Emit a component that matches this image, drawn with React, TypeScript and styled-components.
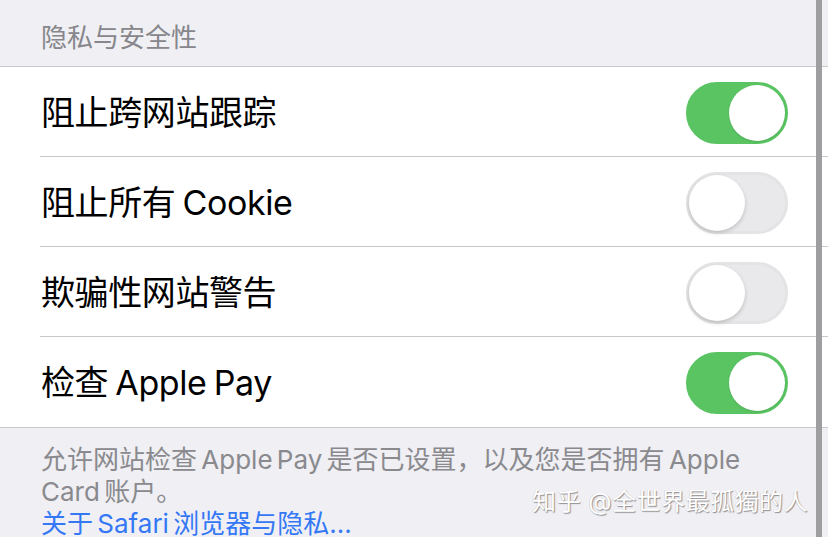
import React, { useState } from "react";
import styled, { createGlobalStyle } from "styled-components";

const GlobalStyle = createGlobalStyle`
  html, body {
    margin: 0;
    padding: 0;
    background: #efeff4;
    overflow: hidden;
  }
  body {
    font-family: Inter, "Noto Sans CJK SC", sans-serif;
    -webkit-font-smoothing: antialiased;
  }
`;

const Page = styled.div`
  position: relative;
  width: 828px;
  height: 537px;
  background: #efeff4;
  overflow: hidden;
`;

const SectionHeader = styled.div`
  height: 67px;
  padding: 23px 0 0 41px;
  box-sizing: border-box;
  font-size: 26px;
  line-height: 30px;
  color: #86868b;
  border-bottom: 1px solid #c8c7cc;
`;

const Group = styled.div`
  background: #ffffff;
  border-bottom: 1px solid #c8c7cc;
`;

const Row = styled.div<{ $last?: boolean }>`
  display: flex;
  align-items: center;
  justify-content: space-between;
  height: 90px;
  margin-left: 40px;
  padding: 2px 40px 0 0;
  box-sizing: border-box;
  border-bottom: ${({ $last }) => ($last ? "none" : "1px solid #c8c7cc")};
`;

const RowLabel = styled.span`
  padding-left: 1px;
  font-size: 34px;
  line-height: 40px;
  letter-spacing: -0.4px;
  word-spacing: -2px;
  color: #000000;
`;

const Track = styled.button<{ $on: boolean }>`
  display: flex;
  justify-content: ${({ $on }) => ($on ? "flex-end" : "flex-start")};
  width: 102px;
  height: 62px;
  padding: 0;
  border-radius: 31px;
  cursor: pointer;
  border: 3px solid ${({ $on }) => ($on ? "#5ac463" : "#e4e4e6")};
  background: ${({ $on }) => ($on ? "#5ac463" : "#e9e9eb")};
  box-sizing: border-box;
`;

const Knob = styled.span<{ $on: boolean }>`
  width: 56px;
  height: 56px;
  border-radius: 50%;
  background: #ffffff;
  box-shadow: ${({ $on }) =>
    $on ? "0 1px 2px rgba(0,0,0,0.12)" : "0 2px 4px rgba(0,0,0,0.18)"};
`;

const Footer = styled.div`
  padding: 16px 40px 0 41px;
  font-size: 26px;
  line-height: 32px;
  word-spacing: -3px;
  color: #8a8a8e;
`;

const FooterLink = styled.a`
  display: block;
  color: #3478f6;
  text-decoration: none;
`;

const ScrollIndicator = styled.div`
  position: absolute;
  top: 0;
  bottom: 0;
  right: 6px;
  width: 6px;
  background: #9e9ea1;
`;

const Watermark = styled.div`
  position: absolute;
  right: 20px;
  bottom: 20px;
  font-size: 24px;
  line-height: 30px;
  letter-spacing: 0.5px;
  color: #ffffff;
  text-shadow: 1px 1px 1px rgba(90, 90, 90, 0.65),
    -0.5px -0.5px 0 rgba(120, 120, 120, 0.3);
  white-space: nowrap;
`;

type Setting = { id: string; label: string; on: boolean };

const initialSettings: Setting[] = [
  { id: "cross-site", label: "阻止跨网站跟踪", on: true },
  { id: "cookies", label: "阻止所有 Cookie", on: false },
  { id: "fraud", label: "欺骗性网站警告", on: false },
  { id: "apple-pay", label: "检查 Apple Pay", on: true },
];

const Switch: React.FC<{ on: boolean; onToggle: () => void }> = ({
  on,
  onToggle,
}) => (
  <Track $on={on} onClick={onToggle} aria-pressed={on}>
    <Knob $on={on} />
  </Track>
);

const App: React.FC = () => {
  const [settings, setSettings] = useState(initialSettings);

  const toggle = (id: string) =>
    setSettings((prev) =>
      prev.map((s) => (s.id === id ? { ...s, on: !s.on } : s))
    );

  return (
    <>
      <GlobalStyle />
      <Page>
        <SectionHeader>隐私与安全性</SectionHeader>
        <Group>
          {settings.map((s, i) => (
            <Row key={s.id} $last={i === settings.length - 1}>
              <RowLabel>{s.label}</RowLabel>
              <Switch on={s.on} onToggle={() => toggle(s.id)} />
            </Row>
          ))}
        </Group>
        <Footer>
          允许网站检查 Apple Pay 是否已设置，以及您是否拥有 Apple Card 账户。
          <FooterLink href="#">关于 Safari 浏览器与隐私...</FooterLink>
        </Footer>
        <Watermark>知乎 @全世界最孤獨的人</Watermark>
        <ScrollIndicator />
      </Page>
    </>
  );
};

export default App;
